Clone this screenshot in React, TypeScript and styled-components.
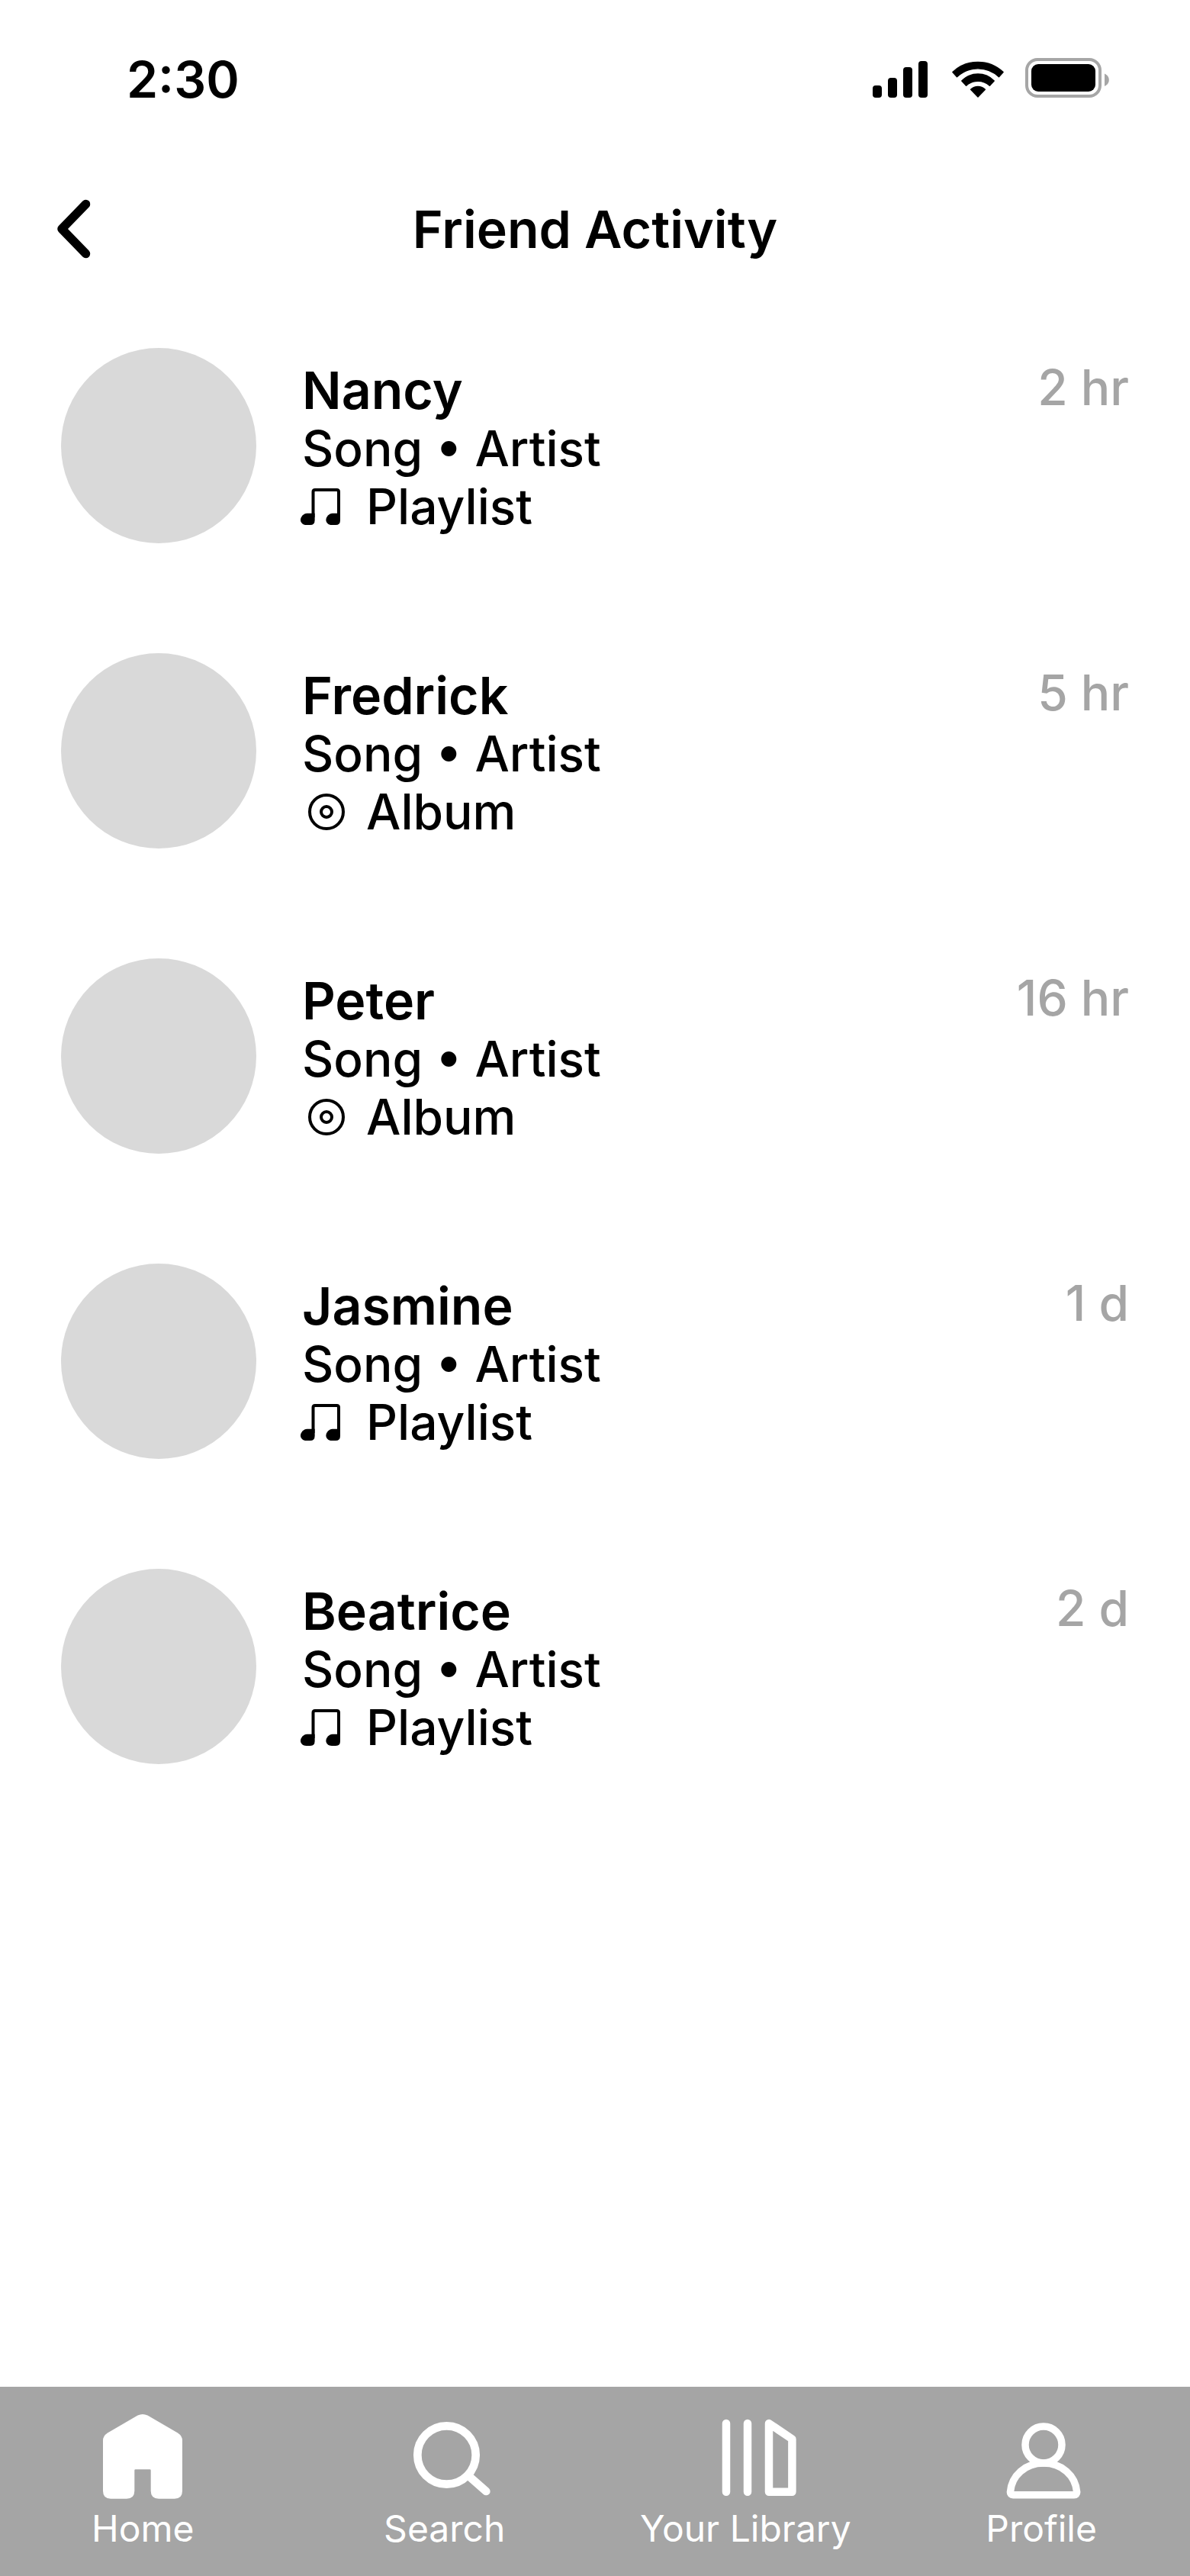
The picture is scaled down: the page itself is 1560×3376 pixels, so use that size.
import React from "react";
import styled, { createGlobalStyle } from "styled-components";

const GlobalStyle = createGlobalStyle`
  *, *::before, *::after { box-sizing: border-box; }
  body {
    margin: 0;
    background: #ffffff;
    color: #000000;
    font-family: Inter, "Liberation Sans", sans-serif;
  }
`;

const Screen = styled.div`
  display: flex;
  flex-direction: column;
  min-height: 100vh;
`;

const StatusBar = styled.div`
  display: flex;
  align-items: center;
  justify-content: space-between;
  padding: 64px 104px 0 166px;
`;

const Clock = styled.time`
  font-size: 66px;
  line-height: 80px;
  font-weight: 600;
`;

const Header = styled.header`
  display: grid;
  grid-template-columns: 80px 1fr 80px;
  align-items: center;
  padding: 116px 56px 0;
`;

const BackButton = styled.button`
  display: flex;
  align-items: center;
  justify-content: center;
  width: 80px;
  height: 80px;
  padding: 0;
  border: 0;
  background: none;
  color: inherit;
  cursor: pointer;
`;

const Title = styled.h1`
  margin: 0;
  font-size: 68px;
  line-height: 80px;
  font-weight: 600;
  text-align: center;
`;

const Feed = styled.ul`
  flex: 1;
  display: flex;
  flex-direction: column;
  gap: 144px;
  margin: 0;
  padding: 116px 80px 144px;
  list-style: none;
`;

const FeedItem = styled.li`
  display: flex;
  align-items: flex-start;
  gap: 60px;
`;

const Avatar = styled.div`
  flex: none;
  width: 256px;
  height: 256px;
  border-radius: 50%;
  background: #d9d9d9;
`;

const Details = styled.div`
  flex: 1;
  padding-top: 16px;
`;

const Name = styled.h2`
  margin: 0;
  font-size: 68px;
  line-height: 78px;
  font-weight: 600;
`;

const Line = styled.p`
  display: flex;
  align-items: center;
  gap: 24px;
  margin: 0;
  font-size: 64px;
  line-height: 76px;
  font-weight: 500;
`;

const When = styled.time`
  padding-top: 16px;
  font-size: 64px;
  line-height: 72px;
  font-weight: 500;
  color: #a5a5a5;
`;

const TabBar = styled.nav`
  display: flex;
  justify-content: space-between;
  padding: 32px 122px 32px 120px;
  background: #a5a5a5;
`;

const Tab = styled.a`
  display: flex;
  flex-direction: column;
  align-items: center;
  gap: 4px;
  color: #ffffff;
  font-size: 48px;
  line-height: 60px;
  font-weight: 400;
  text-decoration: none;

  &:first-child {
    margin-right: 72px;
  }
`;

const Icon = styled.svg`
  flex: none;
  display: block;
  overflow: visible;
`;

const StatusIcons = () => (
  <Icon width="312" height="56" viewBox="0 0 312 56" role="img" aria-label="Signal, Wi-Fi and battery">
    <rect x="0" y="36" width="12" height="16" rx="4" />
    <rect x="20" y="26" width="12" height="26" rx="4" />
    <rect x="40" y="12" width="12" height="40" rx="4" />
    <rect x="60" y="4" width="12" height="48" rx="4" />
    <g transform="translate(104 4)" stroke="#000" strokeWidth="1.4" strokeLinejoin="round">
      <path d="M.9 14.5A48.3 48.3 0 0 1 67.1 14.5L61.5 20.8A40 40 0 0 0 6.5 20.8Z" />
      <path d="M12.8 26A29.5 29.5 0 0 1 55.2 26L49.4 32.2A23 23 0 0 0 18.6 32.2Z" />
      <path d="M24.6 37.2A14 14 0 0 1 43.4 37.2L34 47Z" />
    </g>
    <rect x="202" y="2" width="96" height="48" rx="14" fill="none" stroke="#a6a6a6" strokeWidth="4" />
    <rect x="208" y="8" width="84" height="36" rx="9" />
    <path d="M304 20.5C307.5 22 309.8 25 309.8 28.8S307.5 35.5 304 37Z" fill="#a6a6a6" />
  </Icon>
);

const BackIcon = () => (
  <Icon width="80" height="80" viewBox="0 0 80 80" aria-hidden="true">
    <path d="M56.5 7.5L25 40L56.5 72.5" fill="none" stroke="currentColor" strokeWidth="11.5" strokeLinecap="round" strokeLinejoin="round" />
  </Icon>
);

const NoteIcon = () => (
  <Icon width="60" height="48" viewBox="0 0 60 48" aria-hidden="true">
    <path d="M14.5 38V4.5Q14.5 2 17 2H45.5Q48 2 48 4.5V38" fill="none" stroke="#000" strokeWidth="4" />
    <path d="M6.5 32.7H16.6V42Q16.6 48 10.6 48H5.5C1 48-2 45-2 41.2S2 32.7 6.5 32.7Z" />
    <path d="M39.9 32.7H50V42Q50 48 44 48H38.9C34.4 48 31.4 45 31.4 41.2S35.4 32.7 39.9 32.7Z" />
  </Icon>
);

const DiscIcon = () => (
  <Icon width="60" height="48" viewBox="0 0 60 48" fill="none" stroke="#000" strokeWidth="4" aria-hidden="true">
    <circle cx="32" cy="24" r="22" />
    <circle cx="32" cy="24" r="7" />
  </Icon>
);

const HomeIcon = () => (
  <Icon width="120" height="120" viewBox="0 0 120 120" fill="currentColor" aria-hidden="true">
    <path d="M53.5 5.5Q60 2.5 66.5 5.5L106 28.6Q112 32.5 112 38.5V104.5Q112 114.7 101.8 114.7H81Q70.7 114.7 70.7 104.5V77.6Q70.7 76.3 69.4 76.3H50.6Q49.3 76.3 49.3 77.6V104.5Q49.3 114.7 39 114.7H18.2Q8 114.7 8 104.5V38.5Q8 32.5 14 28.6Z" />
  </Icon>
);

const SearchIcon = () => (
  <Icon width="120" height="120" viewBox="0 0 120 120" fill="none" stroke="currentColor" strokeWidth="10.7" strokeLinecap="round" aria-hidden="true">
    <circle cx="62.5" cy="57.5" r="38.2" />
    <path d="M91 84.5L114.3 105" />
  </Icon>
);

const LibraryIcon = () => (
  <Icon width="120" height="120" viewBox="0 0 120 120" fill="none" stroke="currentColor" strokeWidth="10.5" strokeLinecap="round" strokeLinejoin="round" aria-hidden="true">
    <path d="M35 16V105.7M63 16V105.7M91 16L121.4 36.5V105.7H91Z" />
  </Icon>
);

const ProfileIcon = () => (
  <Icon width="120" height="120" viewBox="0 0 120 120" fill="none" stroke="currentColor" strokeWidth="9.5" strokeLinejoin="round" aria-hidden="true">
    <circle cx="63" cy="44" r="24" />
    <path d="M63 68C39 68 21 84.5 19.4 106Q19.4 109.7 23 109.7H103Q106.7 109.7 106.7 106C105 84.5 87 68 63 68Z" />
  </Icon>
);

type Source = "Playlist" | "Album";

const friends: { name: string; source: Source; when: string }[] = [
  { name: "Nancy", source: "Playlist", when: "2 hr" },
  { name: "Fredrick", source: "Album", when: "5 hr" },
  { name: "Peter", source: "Album", when: "16 hr" },
  { name: "Jasmine", source: "Playlist", when: "1 d" },
  { name: "Beatrice", source: "Playlist", when: "2 d" },
];

const tabs = [
  { label: "Home", href: "#home", Glyph: HomeIcon },
  { label: "Search", href: "#search", Glyph: SearchIcon },
  { label: "Your Library", href: "#library", Glyph: LibraryIcon },
  { label: "Profile", href: "#profile", Glyph: ProfileIcon },
];

export default function App() {
  return (
    <>
      <GlobalStyle />
      <Screen>
        <StatusBar>
          <Clock>2:30</Clock>
          <StatusIcons />
        </StatusBar>
        <Header>
          <BackButton type="button" aria-label="Back">
            <BackIcon />
          </BackButton>
          <Title>Friend Activity</Title>
        </Header>
        <Feed>
          {friends.map(({ name, source, when }) => (
            <FeedItem key={name}>
              <Avatar />
              <Details>
                <Name>{name}</Name>
                <Line>Song • Artist</Line>
                <Line>
                  {source === "Playlist" ? <NoteIcon /> : <DiscIcon />}
                  {source}
                </Line>
              </Details>
              <When>{when}</When>
            </FeedItem>
          ))}
        </Feed>
        <TabBar aria-label="Main">
          {tabs.map(({ label, href, Glyph }) => (
            <Tab key={label} href={href}>
              <Glyph />
              {label}
            </Tab>
          ))}
        </TabBar>
      </Screen>
    </>
  );
}
